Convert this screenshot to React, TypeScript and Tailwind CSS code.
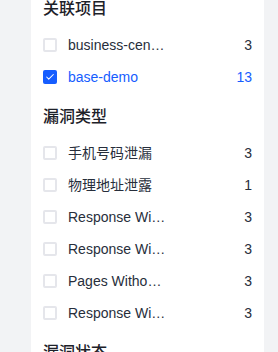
import { Check } from "lucide-react";

interface FilterItem {
  label: string;
  count: number;
  checked?: boolean;
}

interface FilterSection {
  title: string;
  items: FilterItem[];
}

const SECTIONS: FilterSection[] = [
  {
    title: "关联项目",
    items: [
      { label: "business-center-demo", count: 3 },
      { label: "base-demo", count: 13, checked: true },
    ],
  },
  {
    title: "漏洞类型",
    items: [
      { label: "手机号码泄漏", count: 3 },
      { label: "物理地址泄露", count: 1 },
      { label: "Response With Sensitive Data", count: 3 },
      { label: "Response Without Security Headers", count: 3 },
      { label: "Pages Without Cache Control", count: 3 },
      { label: "Response With Server Banner", count: 3 },
    ],
  },
  {
    title: "漏洞状态",
    items: [{ label: "待确认", count: 6 }],
  },
];

function FilterRow({ label, count, checked }: FilterItem) {
  return (
    <label className="flex items-center h-8 cursor-pointer">
      {checked ? (
        <span className="w-3.5 h-3.5 rounded-[2px] bg-[#165dff] flex items-center justify-center shrink-0">
          <Check size={10} strokeWidth={2.5} className="text-white" />
        </span>
      ) : (
        <span className="w-3.5 h-3.5 rounded-[2px] border-2 border-[#e5e6eb] bg-white shrink-0" />
      )}
      <span
        className={`ml-[11px] w-[99px] truncate text-sm ${
          checked ? "text-[#165dff]" : "text-[#272e3b]"
        }`}
      >
        {label}
      </span>
      <span className={`ml-auto text-sm ${checked ? "text-[#165dff]" : "text-[#272e3b]"}`}>
        {count}
      </span>
    </label>
  );
}

export default function App() {
  return (
    <div
      className="w-[278px] h-[352px] overflow-hidden bg-[#f2f3f5]"
      style={{ fontFamily: '"Liberation Sans", "Noto Sans CJK SC", sans-serif' }}
    >
      <div className="ml-[31px] w-[233px] bg-white px-3 -mt-[3px] pb-4">
        {SECTIONS.map((section, i) => (
          <div key={section.title} className={i > 0 ? "mt-3" : ""}>
            <p className="text-base leading-6 font-medium text-[#1d2129] mb-2">{section.title}</p>
            {section.items.map((item) => (
              <FilterRow key={item.label} {...item} />
            ))}
          </div>
        ))}
      </div>
    </div>
  );
}
